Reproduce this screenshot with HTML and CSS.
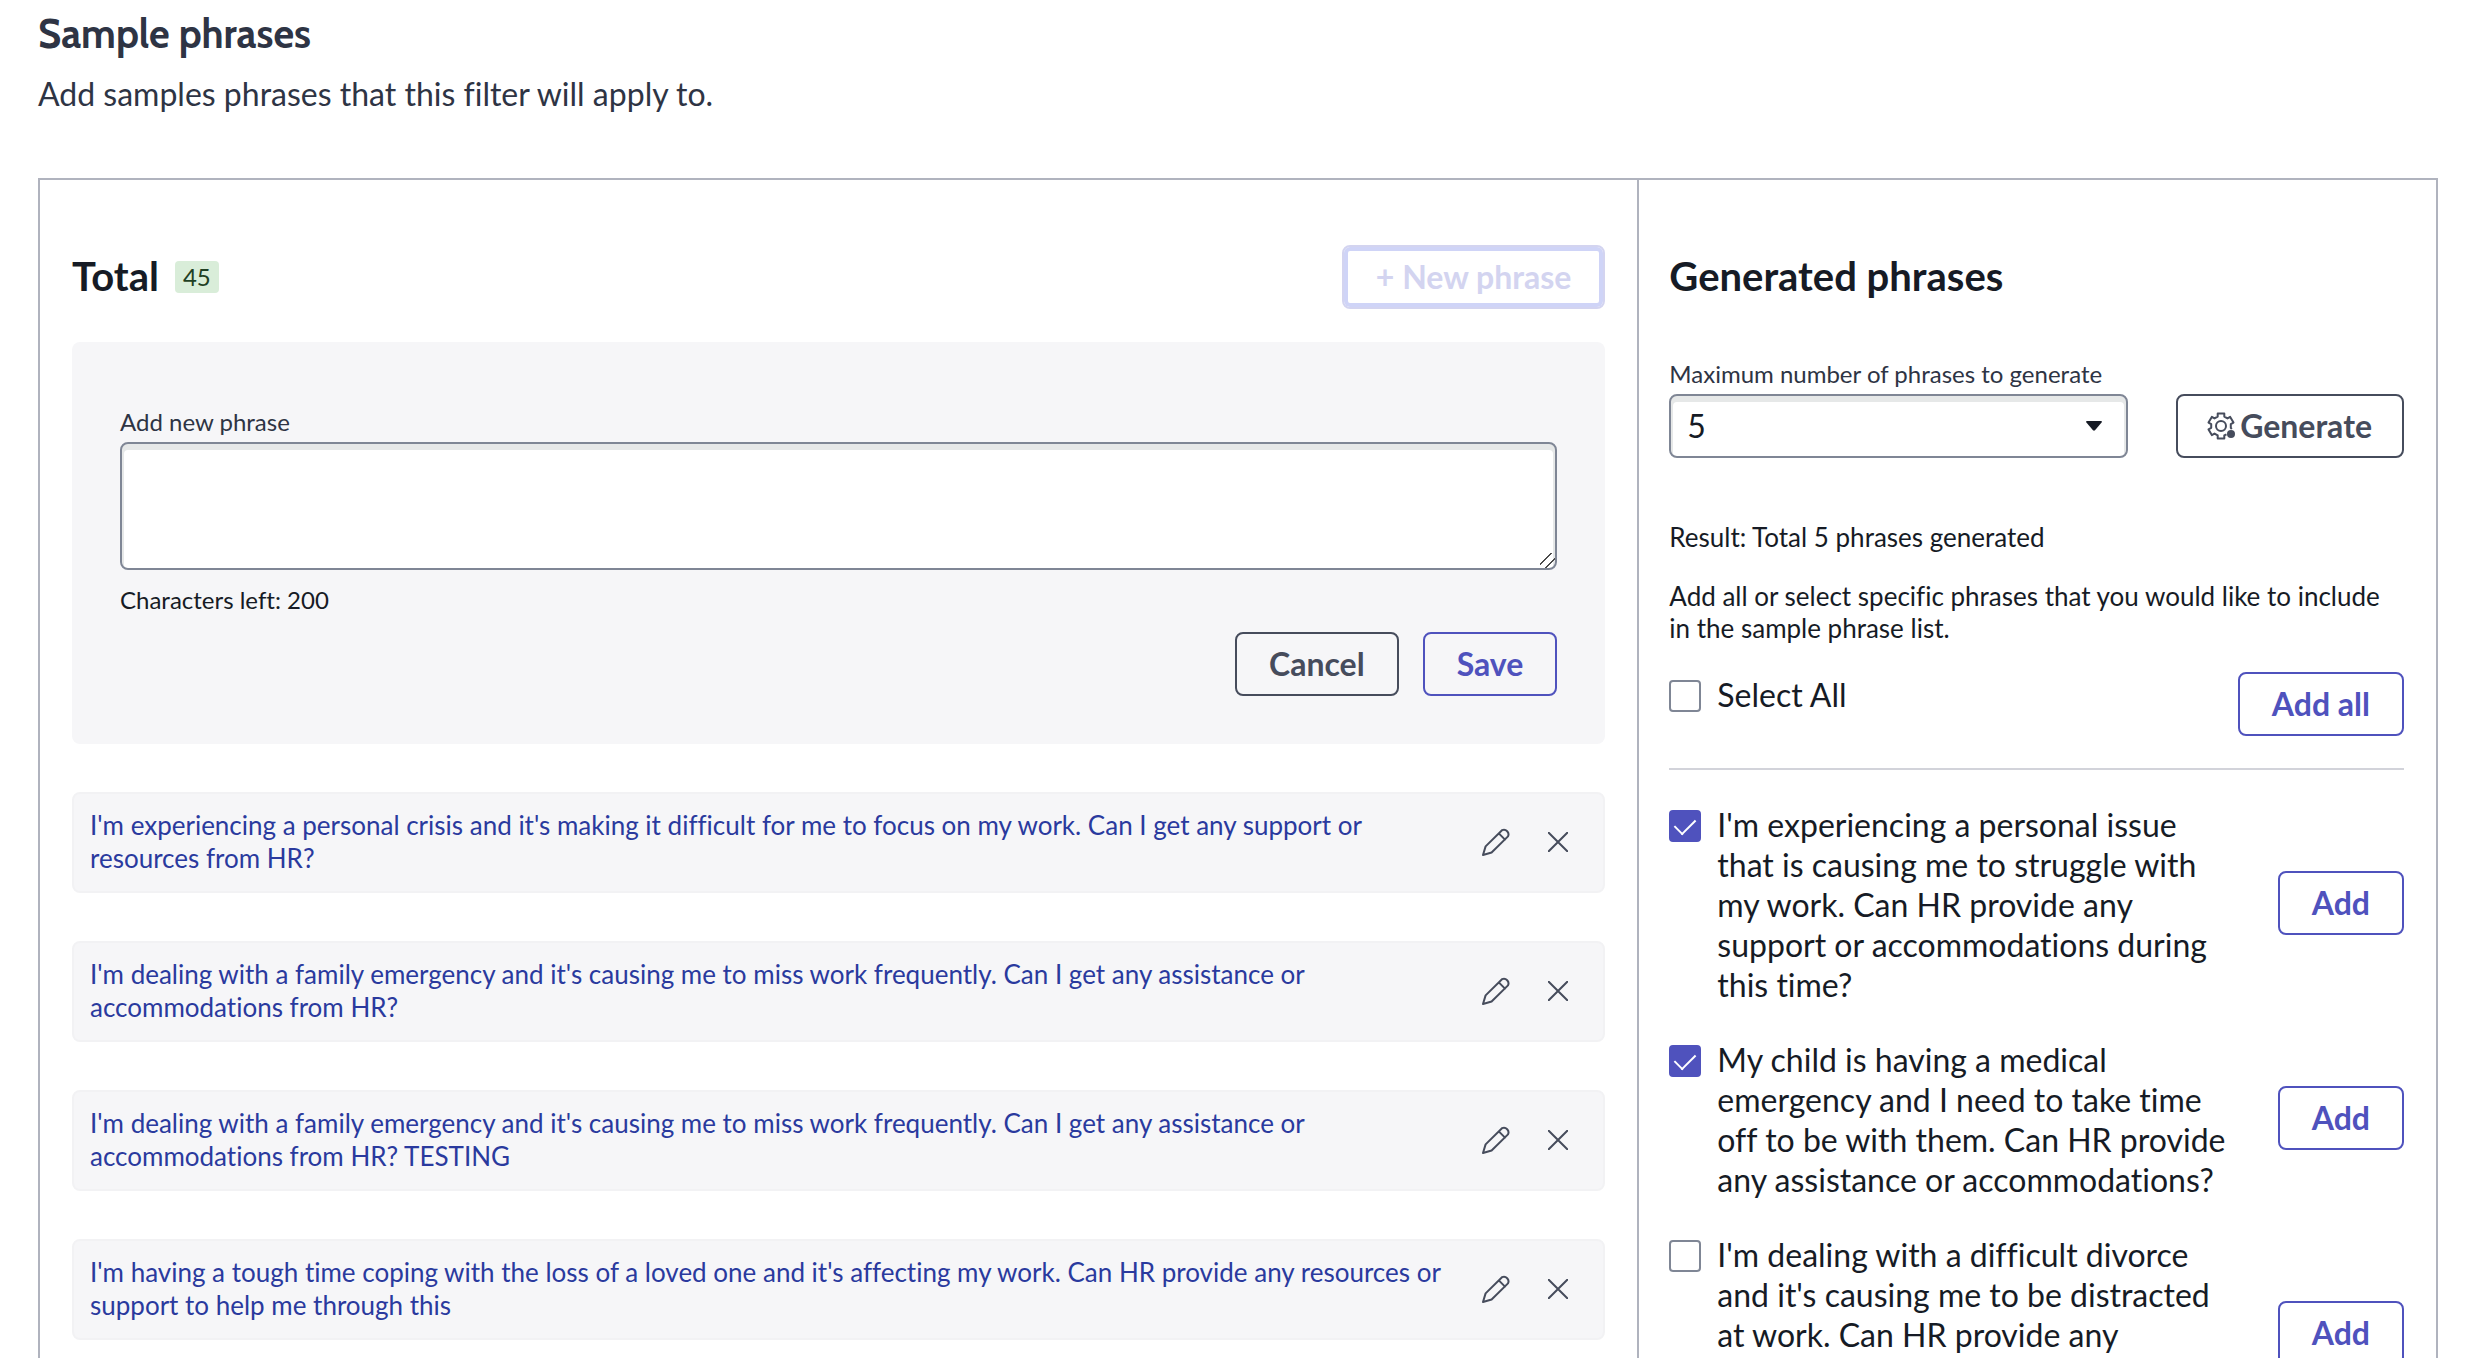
FILE: index.html
```html
<!DOCTYPE html>
<html lang="en">
<head>
<meta charset="utf-8">
<title>Sample phrases</title>
<link rel="stylesheet" href="styles.css">
</head>
<body>
<svg class="sprite" aria-hidden="true">
  <symbol id="icon-pencil" viewBox="0 0 28 28">
    <path d="M1 27 L3.6 18.4 L20 2.2 A4.6 4.6 0 0 1 26 8.4 L9.6 24.5 Z M16.8 5.4 L23 11.6"/>
  </symbol>
  <symbol id="icon-close" viewBox="0 0 20 20">
    <path d="M.7 .7 L19.3 19.3 M19.3 .7 L.7 19.3"/>
  </symbol>
</svg>
<header class="intro">
  <h1 class="intro-title">Sample phrases</h1>
  <p class="intro-text">Add samples phrases that this filter will apply to.</p>
</header>
<main class="board">
  <section class="samples">
    <div class="section-head">
      <h2 class="heading">Total</h2>
      <span class="badge">45</span>
      <button class="btn btn-primary btn-new" type="button" disabled>+ New phrase</button>
    </div>
    <form class="editor">
      <label class="field-label" for="new-phrase">Add new phrase</label>
      <textarea class="field editor-input" id="new-phrase" maxlength="200"></textarea>
      <p class="note counter">Characters left: 200</p>
      <div class="editor-actions">
        <button class="btn" type="button">Cancel</button>
        <button class="btn btn-primary" type="button">Save</button>
      </div>
    </form>
    <ul class="phrases">
      <li class="phrase">
        <p class="phrase-text">I'm experiencing a personal crisis and it's making it difficult for me to focus on my work. Can I get any support or resources from HR?</p>
        <button class="icon-btn" type="button" aria-label="Edit"><svg class="icon-pencil"><use href="#icon-pencil"/></svg></button>
        <button class="icon-btn" type="button" aria-label="Remove"><svg class="icon-close"><use href="#icon-close"/></svg></button>
      </li>
      <li class="phrase">
        <p class="phrase-text">I'm dealing with a family emergency and it's causing me to miss work frequently. Can I get any assistance or accommodations from HR?</p>
        <button class="icon-btn" type="button" aria-label="Edit"><svg class="icon-pencil"><use href="#icon-pencil"/></svg></button>
        <button class="icon-btn" type="button" aria-label="Remove"><svg class="icon-close"><use href="#icon-close"/></svg></button>
      </li>
      <li class="phrase">
        <p class="phrase-text">I'm dealing with a family emergency and it's causing me to miss work frequently. Can I get any assistance or accommodations from HR? TESTING</p>
        <button class="icon-btn" type="button" aria-label="Edit"><svg class="icon-pencil"><use href="#icon-pencil"/></svg></button>
        <button class="icon-btn" type="button" aria-label="Remove"><svg class="icon-close"><use href="#icon-close"/></svg></button>
      </li>
      <li class="phrase">
        <p class="phrase-text">I'm having a tough time coping with the loss of a loved one and it's affecting my work. Can HR provide any resources or support to help me through this</p>
        <button class="icon-btn" type="button" aria-label="Edit"><svg class="icon-pencil"><use href="#icon-pencil"/></svg></button>
        <button class="icon-btn" type="button" aria-label="Remove"><svg class="icon-close"><use href="#icon-close"/></svg></button>
      </li>
    </ul>
  </section>
  <section class="generated">
    <div class="section-head">
      <h2 class="heading">Generated phrases</h2>
    </div>
    <form class="generator">
      <div class="generator-field">
        <label class="field-label" for="max-phrases">Maximum number of phrases to generate</label>
        <div class="select-wrap">
          <select class="field select" id="max-phrases"><option>5</option></select>
          <svg class="select-arrow" viewBox="0 0 16 10" aria-hidden="true"><path d="M1 0 H15 Q16.500 .3 15.600 1.600 L9 9.300 Q8 10.200 7 9.300 L.4 1.600 Q-.5 .3 1 0 Z"/></svg>
        </div>
      </div>
      <button class="btn btn-generate" type="button">
        <svg class="icon-gear" viewBox="-14 -14 28 28" aria-hidden="true">
          <path d="M5.500 8.300 L3.300 9.400 V12.500 H-3.300 V9.400 L-6.490 7.560 L-9.180 9.110 L-12.480 3.390 L-9.790 1.840 V-1.840 L-12.480 -3.390 L-9.180 -9.110 L-6.490 -7.560 L-3.300 -9.400 V-12.500 H3.300 V-9.400 L6.490 -7.560 L9.180 -9.110 L12.480 -3.390 L9.790 -1.840 V1.840 L10.800 3"/>
          <circle cx="0" cy="0" r="5"/>
          <circle class="icon-gear-dot" cx="10" cy="8" r="4"/>
        </svg>Generate</button>
    </form>
    <p class="note result">Result: Total 5 phrases generated</p>
    <p class="note hint">Add all or select specific phrases that you would like to include in the sample phrase list.</p>
    <div class="select-all">
      <label class="check"><input class="check-box" type="checkbox"><span>Select All</span></label>
      <button class="btn btn-primary" type="button">Add all</button>
    </div>
    <ul class="results">
      <li class="result-row">
        <label class="check"><input class="check-box" type="checkbox" checked><span>I'm experiencing a personal issue that is causing me to struggle with my work. Can HR provide any support or accommodations during this time?</span></label>
        <button class="btn btn-primary" type="button">Add</button>
      </li>
      <li class="result-row">
        <label class="check"><input class="check-box" type="checkbox" checked><span>My child is having a medical emergency and I need to take time off to be with them. Can HR provide any assistance or accommodations?</span></label>
        <button class="btn btn-primary" type="button">Add</button>
      </li>
      <li class="result-row result-row-tall">
        <label class="check"><input class="check-box" type="checkbox"><span>I'm dealing with a difficult divorce and it's causing me to be distracted at work. Can HR provide any</span></label>
        <button class="btn btn-primary" type="button">Add</button>
      </li>
    </ul>
  </section>
</main>
</body>
</html>
```
FILE: styles.css
```css
* {
  box-sizing: border-box;
}

body {
  display: flex;
  flex-direction: column;
  height: 100vh;
  margin: 0;
  padding: 0 40px 0 38px;
  overflow: hidden;
  background: #fff;
  color: #161b25;
  font-family: Lato, "Open Sans", sans-serif;
  font-size: 32px;
  font-variant-ligatures: none;
  line-height: 40px;
}

h1, h2, p, ul {
  margin: 0;
  padding: 0;
}

ul {
  list-style: none;
}

button, select, textarea {
  font: inherit;
}

.sprite {
  display: none;
}

.intro {
  padding: 10px 0 64px;
  color: #2e3444;
}

.intro-title {
  margin-bottom: 16px;
  font-family: Cabin, Lato, sans-serif;
  font-size: 40px;
  line-height: 48px;
}

.board {
  display: grid;
  flex: 1;
  grid-template-columns: 2fr 1fr;
  min-height: 0;
  overflow: hidden;
  border: 2px solid #b0b3be;
  border-bottom: 0;
}

.samples {
  padding: 65px 32px 0;
}

.generated {
  padding: 65px 32px 0 30px;
  border-left: 2px solid #b0b3be;
}

.section-head {
  display: flex;
  align-items: center;
  height: 64px;
}

.heading {
  margin-bottom: 2px;
  font-size: 40px;
  line-height: 48px;
}

.badge {
  margin-left: 16px;
  padding: 0 8px;
  border-radius: 4px;
  background: #d9edd9;
  color: #1f4024;
  font-size: 24px;
  line-height: 32px;
}

.btn {
  display: inline-flex;
  flex: none;
  align-items: center;
  height: 64px;
  padding: 0 32px;
  border: 2px solid #464c5c;
  border-radius: 8px;
  background: transparent;
  color: #464c5c;
  font-weight: 700;
}

.btn-primary {
  border-color: #4f52bd;
  color: #4f52bd;
}

.btn-new {
  margin-left: auto;
  border-color: #d3d4f0;
  box-shadow: inset 0 0 0 4px #cfd4f7;
  color: #d3d4f0;
}

.btn-generate {
  padding: 0 30px 0 29px;
}

.editor {
  display: flex;
  flex-direction: column;
  margin: 33px 0 48px;
  padding: 64px 48px 48px;
  border-radius: 8px;
  background: #f6f6f8;
}

.field-label {
  display: block;
  color: #2e3444;
  font-size: 24px;
  line-height: 32px;
}

.field {
  display: block;
  width: 100%;
  border: 2px solid #7f8695;
  border-radius: 8px;
  background: #fff;
  box-shadow: inset 0 4px 0 2px #e6e8e8;
  color: #161b25;
}

.editor-input {
  height: 128px;
  margin: 4px 0 14px;
  padding: 12px 16px;
  resize: vertical;
}

.editor-input::-webkit-resizer {
  background: linear-gradient(135deg, transparent 35%, #4a4a4a 36% 41%, transparent 42% 64%, #4a4a4a 65% 70%, transparent 71%);
}

.note {
  font-size: 26px;
  line-height: 32px;
}

.counter {
  font-size: 24px;
}

.editor-actions {
  display: flex;
  justify-content: flex-end;
  gap: 24px;
  margin-top: 16px;
}

.phrases {
  display: grid;
  gap: 48px;
}

.phrase {
  display: flex;
  align-items: center;
  padding: 15px 34px 16px 16px;
  border: 2px solid #f2f2f4;
  border-radius: 8px;
  background: #f6f6f8;
}

.phrase-text {
  flex: 1;
  padding-right: 32px;
  color: #2a3a9e;
  font-size: 26px;
  line-height: 33px;
}

.icon-btn {
  display: flex;
  align-items: center;
  justify-content: center;
  width: 32px;
  height: 32px;
  padding: 0;
  border: 0;
  background: none;
  fill: none;
  stroke: #464c5c;
  stroke-width: 2;
  stroke-linejoin: round;
  stroke-linecap: round;
}

.icon-btn + .icon-btn {
  margin-left: 30px;
  margin-right: -5px;
}

.icon-pencil {
  width: 28px;
  height: 28px;
}

.icon-close {
  width: 20px;
  height: 20px;
}

.generator {
  display: flex;
  align-items: flex-end;
  gap: 48px;
  margin-top: 49px;
}

.generator-field {
  flex: 1;
}

.select-wrap {
  display: grid;
  align-items: center;
  margin-top: 4px;
}

.select,
.select-arrow {
  grid-area: 1 / 1;
}

.select {
  height: 64px;
  padding: 0 16px;
  appearance: none;
}

.select-arrow {
  width: 16px;
  height: 10px;
  margin-right: 26px;
  justify-self: end;
  fill: #161b25;
  pointer-events: none;
}

.icon-gear {
  width: 28px;
  height: 28px;
  margin-right: 5px;
  fill: none;
  stroke: #464c5c;
  stroke-width: 2;
  stroke-linejoin: round;
}

.icon-gear-dot {
  fill: #464c5c;
  stroke: none;
}

.result {
  margin-top: 63px;
}

.hint {
  margin-top: 27px;
}

.select-all {
  display: flex;
  align-items: flex-start;
  justify-content: space-between;
  margin-top: 28px;
  padding-bottom: 32px;
  border-bottom: 2px solid #d2d3da;
}

.check {
  display: flex;
  align-items: flex-start;
  gap: 16px;
}

.select-all .check {
  margin-top: 3px;
}

.check-box {
  display: grid;
  flex: none;
  place-content: center;
  width: 32px;
  height: 32px;
  margin: 5px 0 0;
  border: 2px solid #7f8695;
  border-radius: 4px;
  background: #fff;
  appearance: none;
}

.check-box:checked {
  border-color: #4f52bd;
  background: #4f52bd;
}

.check-box:checked::before {
  width: 10px;
  height: 18px;
  margin-top: -5px;
  border: solid #fff;
  border-width: 0 2px 2px 0;
  content: "";
  transform: rotate(45deg);
}

.results {
  display: grid;
  gap: 35px;
  margin-top: 35px;
}

.result-row {
  display: flex;
  align-items: center;
  justify-content: space-between;
  gap: 48px;
}

.result-row .check {
  flex: 1;
  align-self: flex-start;
}

.result-row .btn {
  margin-bottom: 4px;
}

.result-row-tall {
  min-height: 200px;
}
```
